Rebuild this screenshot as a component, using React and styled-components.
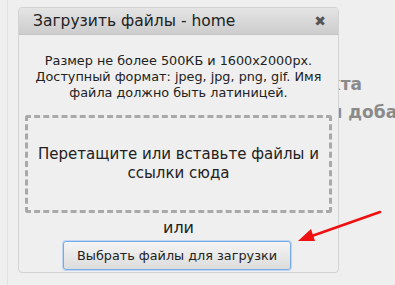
import React from 'react';
import styled, { createGlobalStyle } from 'styled-components';

const GlobalStyle = createGlobalStyle`
  html, body { margin: 0; padding: 0; }
  body {
    background: #efefef;
    font-family: "DejaVu Sans", Verdana, sans-serif;
    width: 395px;
    height: 285px;
    overflow: hidden;
  }
`;

const Page = styled.div`
  position: relative;
  width: 395px;
  height: 285px;
  background: #efefef;
  overflow: hidden;
`;

const SideLine = styled.div`
  position: absolute;
  left: 7px;
  top: 0;
  bottom: 0;
  width: 1px;
  background: #e2e2e2;
`;

const Behind = styled.div`
  padding-top: 73px;
  display: flex;
  flex-direction: column;
  gap: 5px;
  color: #8a8a8a;
  font-weight: bold;
  font-size: 17px;
  line-height: 23px;
  white-space: nowrap;
`;

const BehindLine = styled.div`
  width: ${(p) => p.$end}px;
  text-align: right;
`;

const Dialog = styled.div`
  position: absolute;
  left: 18px;
  top: 7px;
  width: 319px;
  height: 264px;
  border: 1px solid #d3d3d3;
  border-radius: 4px;
  background: #efefef;
  overflow: hidden;
  display: flex;
  flex-direction: column;
`;

const Header = styled.div`
  height: 26px;
  display: flex;
  align-items: center;
  justify-content: space-between;
  padding: 0 12px 0 14px;
  background: linear-gradient(#e4e4e4, #cdcdcd);
  border-bottom: 1px solid #c4c4c4;
`;

const Title = styled.span`
  font-size: 15.5px;
  color: #222;
`;

const Close = styled.span`
  font-size: 14px;
  color: #555;
  font-weight: bold;
`;

const Body = styled.div`
  display: flex;
  flex-direction: column;
  align-items: center;
  padding: 18px 6px 0;
`;

const Info = styled.p`
  margin: 0;
  font-size: 12.8px;
  line-height: 16px;
  color: #222;
  text-align: center;
  padding: 0 6px;
`;

const DropZone = styled.div`
  margin-top: 14px;
  box-sizing: border-box;
  width: 307px;
  height: 98px;
  border: 3px dashed #a9a9a9;
  border-radius: 3px;
  display: flex;
  align-items: center;
  justify-content: center;
  text-align: center;
  font-size: 15px;
  line-height: 19px;
  color: #222;
  padding: 0 4px;
`;

const Or = styled.div`
  margin-top: 5px;
  font-size: 16px;
  line-height: 19px;
  color: #222;
`;

const Button = styled.button`
  margin-top: 4px;
  margin-right: 3px;
  width: 228px;
  height: 29px;
  font-family: "DejaVu Sans", Verdana, sans-serif;
  font-size: 12.8px;
  color: #222;
  background: linear-gradient(#f5f5f5, #dcdcdc);
  border: 1px solid #78aae6;
  border-radius: 3px;
  box-shadow: 0 0 0 1px #bcd6f3;
  padding: 0;
  cursor: pointer;
`;

const Arrow = styled.svg`
  position: absolute;
  left: 295px;
  top: 208px;
`;

export default function App() {
  return (
    <Page>
      <GlobalStyle />
      <SideLine />
      <Behind>
        <BehindLine $end={362}>Фото объекта</BehindLine>
        <BehindLine $end={440}>Выберите и добавьте</BehindLine>
      </Behind>
      <Dialog>
        <Header>
          <Title>Загрузить файлы - home</Title>
          <Close>✖</Close>
        </Header>
        <Body>
          <Info>
            Размер не более 500КБ и 1600x2000px. Доступный формат: jpeg, jpg, png, gif. Имя файла должно быть латиницей.
          </Info>
          <DropZone>Перетащите или вставьте файлы и ссылки сюда</DropZone>
          <Or>или</Or>
          <Button>Выбрать файлы для загрузки</Button>
        </Body>
      </Dialog>
      <Arrow width="90" height="40" viewBox="0 0 90 40">
        <line x1="85" y1="4" x2="14" y2="29" stroke="#f01010" strokeWidth="2.5" strokeLinecap="round" />
        <polygon points="3,33 16,21 20,33" fill="#f01010" />
      </Arrow>
    </Page>
  );
}
